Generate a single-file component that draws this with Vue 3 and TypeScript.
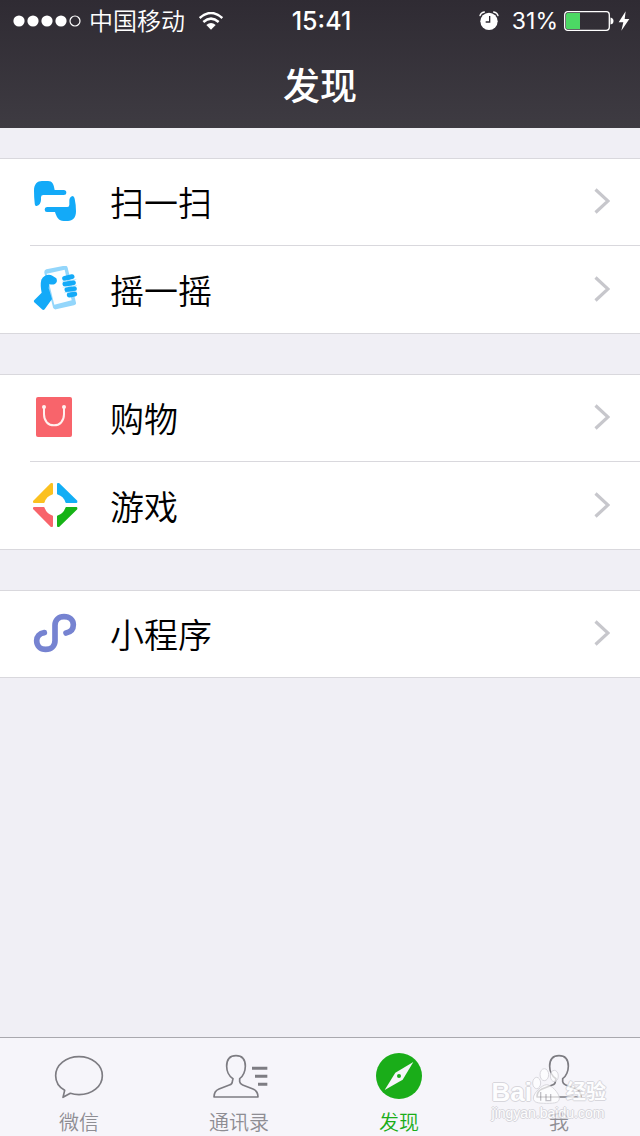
<script setup lang="ts">
import { ref } from 'vue'

interface Entry {
  id: string
  label: string
}

interface Tab {
  id: string
  label: string
}

const groups: Entry[][] = [
  [
    { id: 'scan', label: '扫一扫' },
    { id: 'shake', label: '摇一摇' },
  ],
  [
    { id: 'shop', label: '购物' },
    { id: 'games', label: '游戏' },
  ],
  [{ id: 'mini', label: '小程序' }],
]

const tabs: Tab[] = [
  { id: 'chats', label: '微信' },
  { id: 'contacts', label: '通讯录' },
  { id: 'discover', label: '发现' },
  { id: 'me', label: '我' },
]

const activeTab = ref('discover')
</script>

<template>
  <div class="page">
    <header class="header">
      <div class="status">
        <div class="status-left">
          <svg class="signal" viewBox="0 0 68 12" aria-hidden="true">
            <circle cx="6" cy="6" r="5.6" fill="#fff" />
            <circle cx="20" cy="6" r="5.6" fill="#fff" />
            <circle cx="34" cy="6" r="5.6" fill="#fff" />
            <circle cx="48" cy="6" r="5.6" fill="#fff" />
            <circle cx="62" cy="6" r="5" fill="none" stroke="#fff" stroke-width="1.2" />
          </svg>
          <span class="carrier">中国移动</span>
          <svg class="wifi" viewBox="0 0 72 54" aria-hidden="true">
            <g fill="none" stroke="#fff" stroke-width="7.5">
              <path d="M2 18Q36 -12 70 18" />
              <path d="M13 30Q36 10 59 30" />
            </g>
            <path d="M22 39Q36 27 50 39L36 53Z" fill="#fff" />
          </svg>
        </div>
        <time class="clock">15:41</time>
        <div class="status-right">
          <svg class="alarm" viewBox="0 0 60 60" aria-hidden="true">
            <circle cx="30" cy="31" r="26" fill="#fff" />
            <path d="M3 14Q5 5 16 3M57 14Q55 5 44 3" fill="none" stroke="#fff" stroke-width="4" stroke-linecap="round" />
            <path d="M32 15V33H20" fill="none" stroke="#302c34" stroke-width="4" />
          </svg>
          <span class="percent">31%</span>
          <svg class="battery" viewBox="0 0 50 20" aria-hidden="true">
            <rect x="0.7" y="0.7" width="44.6" height="18.6" rx="3" fill="none" stroke="#fff" stroke-width="1.3" />
            <path d="M3.5 2H16V18H3.5Q2 18 2 16.500V3.500Q2 2 3.500 2Z" fill="#4cd964" />
            <path d="M46.500 6.500Q49.500 7 49.500 10T46.500 13.500Z" fill="#fff" />
          </svg>
          <svg class="bolt" viewBox="0 0 36 60" aria-hidden="true">
            <path d="M23 1L2 34H16L10 59L34 24H20Z" fill="#fff" />
          </svg>
        </div>
      </div>
      <h1 class="title">发现</h1>
    </header>

    <main class="content">
      <nav v-for="(group, index) in groups" :key="index" class="group">
        <a v-for="entry in group" :key="entry.id" class="row" :href="'#' + entry.id">
          <svg v-if="entry.id === 'scan'" class="row-icon" viewBox="33 24 144 144" aria-hidden="true">
            <g fill="#13aaf8">
              <path d="M42 62C42 42 52 33 66 33H84C97 33 101 42 104 60H131Q139 60 139 67.500T131 75H70Q63 75 63 82V90Q62 105 50 108Q44 108 44 98Q42 82 42 62Z" />
              <path d="M168 124C168 144 158 153 144 153H131C116 153 109 140 105 126H81Q74 126 74 118.500T81 111H142Q148 111 148 104V91Q148 82 157 78Q163 78 164 86Q168 104 168 124Z" />
            </g>
          </svg>

          <svg v-else-if="entry.id === 'shake'" class="row-icon" viewBox="33 33 144 144" aria-hidden="true">
            <path d="M79 43L134 32Q141 31 143 38L168 143Q169 149 162 151L108 163Q101 164 99 157L73 53Q72 45 79 43Z" fill="#93d6fb" />
            <path d="M80 56L134 44L155 136L103 149Z" fill="#fdfeff" />
            <path d="M64 74C71 61 86 56 97 62L109 70Q114 81 105 87Q96 90 88 87L86 99L96 132L74 163Q70 167 66 163L42 141Q40 137 44 134L65 113Q60 90 64 74Z" fill="#13aaf8" />
            <g stroke="#13aaf8" stroke-width="15" stroke-linecap="round">
              <path d="M134 70L156 65" />
              <path d="M135 87L160 83" />
              <path d="M141 104L163 101" />
              <path d="M148 120L164 117" />
            </g>
            <g stroke="#b5e2fc" stroke-width="2">
              <path d="M127 80L169 73M128 97L171 91M133 113L171 108" />
            </g>
          </svg>

          <svg v-else-if="entry.id === 'shop'" class="row-icon" viewBox="33 27 144 144" aria-hidden="true">
            <rect x="48" y="36" width="108" height="120" rx="6" fill="#f8646b" />
            <path d="M72 66V88C72 109 85 121 102 121S132 109 132 88V66" fill="none" stroke="#fff0ee" stroke-width="6" />
            <circle cx="72" cy="66" r="6" fill="#fff0ee" />
            <circle cx="132" cy="66" r="6" fill="#fff0ee" />
          </svg>

          <svg v-else-if="entry.id === 'games'" class="row-icon" viewBox="33 36 144 144" aria-hidden="true">
            <g stroke-width="6" stroke-linejoin="round">
              <path d="M96 42V71Q77 77 71 96H42V94L94 42Z" fill="#fbc120" stroke="#fbc120" />
              <path d="M114 42V71Q133 77 139 96H169V94L116 42Z" fill="#12aef5" stroke="#12aef5" />
              <path d="M96 168V139Q77 133 71 114H42V116L94 168Z" fill="#f8646b" stroke="#f8646b" />
              <path d="M114 168V139Q133 133 139 114H169V116L116 168Z" fill="#17b317" stroke="#17b317" />
            </g>
          </svg>

          <svg v-else class="row-icon" viewBox="33 30 144 144" aria-hidden="true">
            <path d="M73 98C58 100 50 110 50 122C50 137 61 148 77 148C94 148 105 137 105 122V76C105 61 116 50 132 50C149 50 160 60 160 74C160 88 152 96 138 99" fill="none" stroke="#7683d1" stroke-width="17" stroke-linecap="round" />
          </svg>

          <span class="row-label">{{ entry.label }}</span>
          <svg class="chevron" viewBox="0 0 16 26" aria-hidden="true">
            <path d="M1.500 1.500L14 13L1.500 24.500" fill="none" stroke="#c7c7cc" stroke-width="3.200" />
          </svg>
        </a>
      </nav>
    </main>

    <nav class="tabbar">
      <button
        v-for="tab in tabs"
        :key="tab.id"
        type="button"
        class="tab"
        :class="{ active: tab.id === activeTab }"
        @click="activeTab = tab.id"
      >
        <svg v-if="tab.id === 'chats'" class="tab-icon" viewBox="57 60 180 156" aria-hidden="true">
          <path d="M104 181C87 171 77 155 77 137C77 105 108 80 147 80S217 105 217 137S186 194 147 194Q133 194 121 190L99 202Z" fill="none" stroke="#7d7c82" stroke-width="5" stroke-linejoin="round" />
        </svg>
        <svg v-else-if="tab.id === 'contacts'" class="tab-icon" viewBox="537 60 180 156" aria-hidden="true">
          <path d="M609 146C596 139 590 122 590 109C590 89 600 77 618 77S646 89 646 109C646 122 640 139 629 146V155Q630 162 638 165L669 177Q684 183 684 201H552Q552 183 567 177L598 165Q607 162 607 155Z" fill="none" stroke="#7d7c82" stroke-width="5" stroke-linejoin="round" />
          <path d="M666 115H712M675 139H712M684 163H712" stroke="#7d7c82" stroke-width="9" />
        </svg>
        <svg v-else-if="tab.id === 'discover'" class="tab-icon" viewBox="57 60 180 156" aria-hidden="true">
          <circle cx="147" cy="138" r="69" fill="#1aad19" />
          <path d="M190 96L158 149L104 180L136 128Z" fill="#f6f5fa" />
          <circle cx="147" cy="138" r="6" fill="#1aad19" />
        </svg>
        <svg v-else class="tab-icon" viewBox="147 60 180 156" aria-hidden="true">
          <path d="M228 146C215 139 209 122 209 109C209 89 219 77 237 77S265 89 265 109C265 122 259 139 248 146V155Q249 162 257 165L288 177Q303 183 303 201H171Q171 183 186 177L217 165Q226 162 226 155Z" fill="none" stroke="#7d7c82" stroke-width="5" stroke-linejoin="round" />
        </svg>
        <span class="tab-label">{{ tab.label }}</span>
      </button>

      <div class="watermark">
        <div class="brand">
          <span>Bai</span>
          <svg class="paw" viewBox="0 0 84 108" aria-hidden="true">
            <g fill="#ffffff" fill-opacity="0.85" stroke="#d2d1d7" stroke-width="3">
              <ellipse cx="14" cy="45" rx="12" ry="17" />
              <ellipse cx="37" cy="20" rx="13" ry="18" />
              <ellipse cx="67" cy="24" rx="12" ry="17" />
              <path d="M44 50C58 50 82 76 82 90C82 104 70 106 44 106S4 104 4 90C4 76 30 50 44 50Z" />
            </g>
            <path d="M26 72V98M42 78V98H56V78" fill="none" stroke="#b5b4ba" stroke-width="4" />
          </svg>
          <span class="brand-cjk">经验</span>
        </div>
        <div class="site">jingyan.baidu.com</div>
      </div>
    </nav>
  </div>
</template>

<style>
html,
body {
  margin: 0;
  background: #f0eff5;
}
</style>

<style scoped>
.page {
  display: flex;
  flex-direction: column;
  min-height: 100vh;
  background: #f0eff5;
  color: #000;
  font-family: Inter, 'Noto Sans CJK SC', sans-serif;
}

.header {
  height: 128px;
  background: linear-gradient(#2f2b33, #3e3b42);
  color: #fff;
}

.status {
  display: grid;
  grid-template-columns: 1fr auto 1fr;
  align-items: center;
  height: 40px;
  padding: 1px 10px 0 13px;
  font-size: 24px;
  line-height: 38px;
}

.status-left,
.status-right {
  display: flex;
  align-items: center;
}

.status-right {
  justify-content: flex-end;
}

.signal {
  width: 68px;
  height: 12px;
}

.carrier {
  margin: 0 14px 0 8px;
  padding-top: 2px;
  font-weight: 350;
  line-height: 36px;
}

.wifi {
  width: 24px;
  height: 18px;
}

.clock {
  font-size: 25px;
  font-weight: 500;
}

.alarm {
  width: 20px;
  height: 20px;
}

.percent {
  margin: 0 6px 0 13px;
  font-size: 23px;
}

.battery {
  width: 50px;
  height: 20px;
}

.bolt {
  width: 12px;
  height: 20px;
  margin-left: 4px;
}

.title {
  margin: 0;
  padding-top: 4px;
  font-size: 37px;
  font-weight: 500;
  line-height: 84px;
  text-align: center;
}

.content {
  display: flex;
  flex: 1;
  flex-direction: column;
  gap: 40px;
  padding-top: 30px;
}

.group {
  background: #fff;
  box-shadow: inset 0 1px #d9d8dd, inset 0 -1px #d9d8dd;
}

.row {
  position: relative;
  display: flex;
  align-items: center;
  height: 88px;
  padding: 0 30px 0 31px;
  color: inherit;
  text-decoration: none;
}

.row:not(:last-child)::after {
  position: absolute;
  right: 0;
  bottom: 0;
  left: 30px;
  height: 1px;
  background: #d9d8dd;
  content: '';
}

.row-icon {
  width: 48px;
  height: 48px;
}

.row-label {
  flex: 1;
  margin-left: 31px;
  padding-top: 4px;
  font-size: 34px;
  font-weight: 350;
  line-height: 48px;
}

.chevron {
  width: 16px;
  height: 26px;
  margin-bottom: 2px;
}

.tabbar {
  position: relative;
  display: flex;
  border-top: 1px solid #a9a8ae;
  background: #f6f5fa;
}

.tab {
  display: flex;
  flex: 1;
  flex-direction: column;
  align-items: center;
  height: 98px;
  padding: 12px 2px 0 0;
  border: 0;
  background: none;
  color: #8e8d93;
  font: inherit;
  cursor: pointer;
}

.tab.active {
  color: #1aad19;
}

.tab-icon {
  flex: none;
  width: 60px;
  height: 52px;
}

.tab-label {
  margin-top: 8px;
  font-size: 20px;
  font-weight: 350;
  line-height: 26px;
}

.watermark {
  position: absolute;
  right: 34px;
  bottom: 14px;
  color: #fff;
  font-family: 'Liberation Sans', 'Noto Sans CJK SC', sans-serif;
  opacity: 0.8;
  pointer-events: none;
  text-shadow: 1px 0 #d0cfd5, -1px 0 #d0cfd5, 0 1px #d0cfd5, 0 -1px #d0cfd5;
}

.brand {
  display: flex;
  align-items: flex-end;
  font-size: 26px;
  font-weight: 700;
  line-height: 24px;
}

.paw {
  width: 28px;
  height: 36px;
  margin-right: 6px;
}

.brand-cjk {
  font-size: 20px;
}

.site {
  font-size: 14px;
  line-height: 18px;
}
</style>
